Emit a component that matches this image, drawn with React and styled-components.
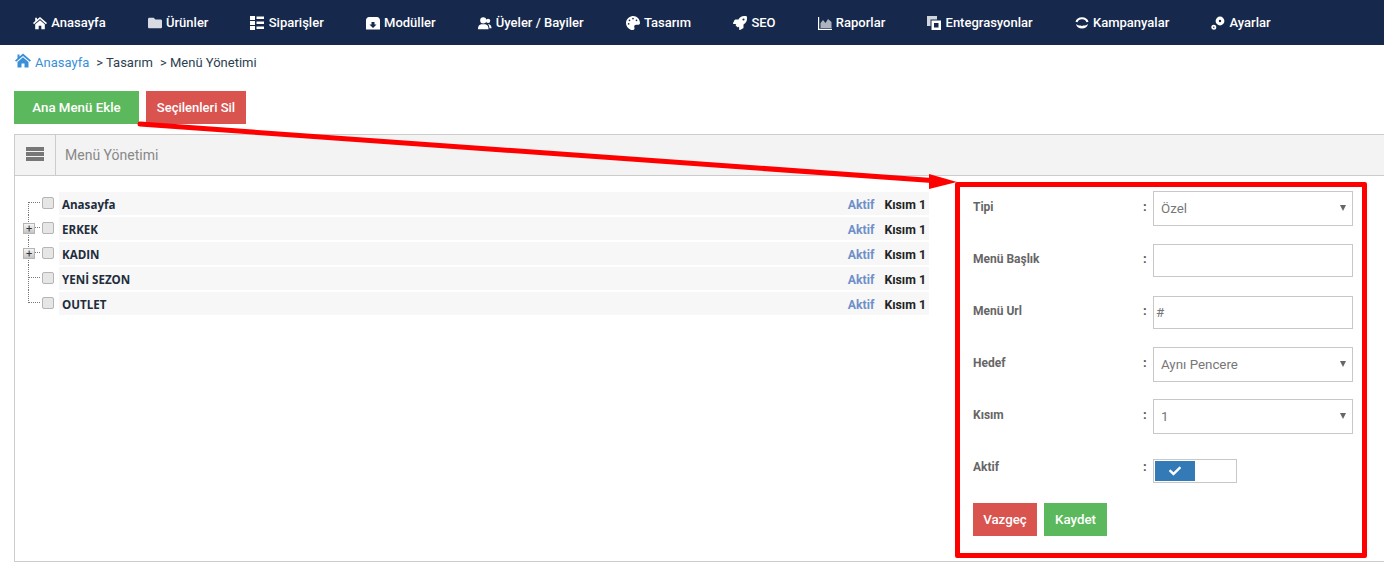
import React from 'react';
import styled, { createGlobalStyle } from 'styled-components';
import { FaFolder, FaPalette, FaRocket, FaCheck } from 'react-icons/fa';

const GlobalStyle = createGlobalStyle`
  html, body {
    margin: 0;
    padding: 0;
    background: #fff;
    font-family: Roboto, "Liberation Sans", sans-serif;
    overflow: hidden;
  }
`;

const Page = styled.div`
  position: relative;
  width: 1384px;
  height: 564px;
  overflow: hidden;
`;

const TopNav = styled.nav`
  height: 45px;
  background: #16284c;
  display: flex;
  align-items: center;
  padding-left: 12px;
`;

const NavItem = styled.a`
  display: flex;
  align-items: center;
  gap: 4.300px;
  padding: 0 21px;
  color: #fff;
  font-size: 13px;
  font-weight: 500;
  white-space: nowrap;

  svg {
    width: 14px;
    height: 14px;
    flex: none;
  }
`;

const Breadcrumb = styled.div`
  display: flex;
  align-items: center;
  height: 34px;
  padding-left: 15px;
  font-size: 13px;
  color: #2c3e50;
`;

const CrumbLink = styled.a`
  display: flex;
  align-items: center;
  gap: 4px;
  color: #3a8fd8;

  svg {
    width: 16px;
    height: 15px;
    margin-top: -3px;
  }
`;

const CrumbPart = styled.span`
  margin-left: 7px;
`;

const Actions = styled.div`
  display: flex;
  gap: 7px;
  padding: 12px 0 10px 14px;
`;

const Button = styled.button`
  height: 33px;
  width: ${(p) => p.$width}px;
  padding: 0;
  border: none;
  background: ${(p) => (p.$tone === 'red' ? '#d9534f' : '#5cb85c')};
  color: #fff;
  font-family: Roboto, "Liberation Sans", sans-serif;
  font-size: ${(p) => p.$size || 13.3}px;
  font-weight: 500;
`;

const Panel = styled.section`
  margin-left: 14px;
  height: 428px;
  border: 1px solid #ccc;
  border-right: none;
  box-sizing: border-box;
`;

const PanelHeader = styled.header`
  height: 40px;
  display: flex;
  align-items: center;
  background: #f3f3f3;
  border-bottom: 1px solid #ccc;
`;

const HeaderIcon = styled.div`
  width: 40px;
  height: 100%;
  display: flex;
  align-items: center;
  justify-content: center;
  border-right: 1px solid #ccc;
  color: #777;

  svg {
    width: 18px;
    height: 14px;
    margin-top: -2px;
  }
`;

const HeaderTitle = styled.div`
  padding-left: 9px;
  font-size: 14px;
  color: #888;
`;

const PanelBody = styled.div`
  display: flex;
  align-items: flex-start;
`;

const Tree = styled.ul`
  list-style: none;
  margin: 16px 0 0;
  padding: 0;
  width: 914px;
  flex: none;
  display: flex;
  flex-direction: column;
  gap: 2px;
`;

const TreeRow = styled.li`
  position: relative;
  display: flex;
  align-items: center;
  height: 23px;
  padding-left: 27px;
`;

const Connector = styled.span`
  position: absolute;
  left: 13px;
  top: ${(p) => (p.$first ? '10px' : '-2px')};
  bottom: ${(p) => (p.$last ? '12px' : '0')};
  border-left: 1px dotted #777;
  width: 11px;

  &::after {
    content: '';
    position: absolute;
    left: 0;
    right: 0;
    top: ${(p) => (p.$first ? '0' : '12px')};
    border-top: 1px dotted #777;
  }
`;

const Expander = styled.span`
  position: absolute;
  left: 8px;
  top: 6px;
  width: 10px;
  height: 9px;
  border: 1px solid #b5b5b5;
  background: linear-gradient(#f6f6f6, #c4c4c4);
  color: #333;
  font-size: 11px;
  line-height: 9px;
  text-align: center;
`;

const TreeCheck = styled.span`
  width: 10px;
  height: 10px;
  margin-bottom: 2px;
  border: 1px solid #b5b5b5;
  border-radius: 2px;
  background: #e6e6e6;
  flex: none;
`;

const RowBody = styled.div`
  flex: 1;
  height: 23px;
  margin-left: 5px;
  padding: 2px 3px 0;
  box-sizing: border-box;
  display: flex;
  align-items: center;
  background: #f7f7f7;
  font-size: 12px;
  font-weight: 700;
`;

const RowName = styled.span`
  flex: 1;
  margin-top: -1px;
  font-family: "Open Sans", "Noto Sans", sans-serif;
  font-size: 11.600px;
  color: #222c3c;
`;

const RowStatus = styled.span`
  color: #6f8fc9;
  font-size: 12.300px;
  margin-right: 10px;
`;

const RowPart = styled.span`
  color: #222;
  font-size: 12.300px;
`;

const FormBox = styled.form`
  width: 412px;
  height: 376px;
  margin-top: 6px;
  margin-left: 26px;
  box-sizing: border-box;
  border: 5px solid #f00;
  border-radius: 2px;
  padding: 4px 9px 0 13px;
  background: #fff;
`;

const FormRow = styled.div`
  display: grid;
  grid-template-columns: 170px 10px 200px;
  height: 52px;
`;

const FieldLabel = styled.label`
  padding-top: 9px;
  font-size: 12px;
  font-weight: 700;
  color: #666;
`;

const Colon = styled.span`
  padding-top: 8px;
  font-size: 13px;
  font-weight: 700;
  color: #555;
`;

const Field = styled.div`
  position: relative;
  width: 200px;
  height: ${(p) => (p.$select ? 35 : 33)}px;
  margin-top: ${(p) => (p.$select ? 0 : 1)}px;
  box-sizing: border-box;
  border: 1px solid #c8c8c8;
  padding: 0 7px 0 ${(p) => (p.$flush ? 2 : 7)}px;
  display: flex;
  align-items: center;
  font-size: 13.330px;
  color: #777;

  ${(p) =>
    p.$select &&
    `&::after {
      content: '';
      position: absolute;
      right: 6px;
      top: 13px;
      border-left: 3px solid transparent;
      border-right: 3px solid transparent;
      border-top: 6px solid #666;
    }`}
`;

const Toggle = styled.div`
  width: 84px;
  height: 24px;
  margin-top: 8px;
  box-sizing: border-box;
  border: 1px solid #c8c8c8;
  padding: 1px;
`;

const ToggleKnob = styled.div`
  width: 40px;
  height: 20px;
  background: #337ab7;
  color: #fff;
  display: flex;
  align-items: center;
  justify-content: center;

  svg {
    width: 12px;
    height: 12px;
  }
`;

const FormActions = styled.div`
  display: flex;
  gap: 7px;
`;

const Annotation = styled.svg`
  position: absolute;
  left: 0;
  top: 0;
  pointer-events: none;
`;

const HomeIcon = () => (
  <svg viewBox="0 0 16 14" fill="currentColor">
    <path d="M8 0l8 7-1.2 1.3L8 2.4 1.2 8.3 0 7l2.5-2.2V1h2v2z" />
    <path d="M8 3.8l5.5 4.7V14h-4v-4h-3v4h-4V8.500z" />
  </svg>
);

const ListIcon = () => (
  <svg viewBox="0 0 14 14" fill="currentColor">
    <path d="M0 0h5v4H0zM0 5h5v4H0zM0 10h5v4H0z" />
    <path d="M6.500 .5H14V3H6.500zM6.500 5.500H14V8H6.500zM6.500 10.500H14V13H6.500z" />
  </svg>
);

const BoxDownIcon = () => (
  <svg viewBox="0 0 14 14" fill="currentColor">
    <path fillRule="evenodd" d="M3 1h8c1.500 0 3 1.500 3 3v9.500H0V4c0-1.500 1.500-3 3-3zM5.500 6v2.500H3.500L7 12l3.500-3.500h-2V6z" />
  </svg>
);

const UsersIcon = () => (
  <svg viewBox="0 0 16 14" fill="currentColor">
    <circle cx="6" cy="4" r="3.500" />
    <path d="M0 14c0-4 2-5 3.500-5.500h5C10 9 12 10 12 14z" />
    <circle cx="11.500" cy="4.500" r="2.500" />
    <path d="M11.500 8c2.500.5 4 2 4 5H13c0-2-.5-3.500-1.500-5z" />
  </svg>
);

const ChartIcon = () => (
  <svg viewBox="0 0 14 14" fill="currentColor">
    <path d="M0 1h1.200v11.800H14V14H0z" />
    <path d="M2.500 12V7L5 4l2.500 3L10 3l3.500 3v6z" opacity="0.65" />
  </svg>
);

const CloneIcon = () => (
  <svg viewBox="0 0 14 14" fill="currentColor">
    <path d="M0 0h10v3.500H3.500V10H0z" opacity="0.8" />
    <path fillRule="evenodd" d="M4.500 4.500H14V14H4.500zM7 7v4.500h4.500V7z" />
  </svg>
);

const CampaignIcon = () => (
  <svg viewBox="0 0 14 14" fill="currentColor">
    <path d="M1.500 6C3 1 11 1 12.500 6" fill="none" stroke="currentColor" strokeWidth="2.200" />
    <path d="M1 8c2 2 4 1 6 2 2-1 4 0 6-2-1 6-11 6-12 0z" />
  </svg>
);

const GearsIcon = () => (
  <svg viewBox="0 0 14 14" fill="none" stroke="currentColor">
    <circle cx="9" cy="5" r="2.800" strokeWidth="3.200" />
    <circle cx="2.800" cy="11.300" r="1.600" strokeWidth="1.800" />
  </svg>
);

const BarsIcon = () => (
  <svg viewBox="0 0 18 14" fill="currentColor">
    <path d="M0 0h18v4H0zM0 5h18v4H0zM0 10h18v4H0z" />
  </svg>
);

const navItems = [
  { label: 'Anasayfa', icon: <HomeIcon /> },
  { label: 'Ürünler', icon: <FaFolder color="#d8dce2" /> },
  { label: 'Siparişler', icon: <ListIcon /> },
  { label: 'Modüller', icon: <BoxDownIcon /> },
  { label: 'Üyeler / Bayiler', icon: <UsersIcon /> },
  { label: 'Tasarım', icon: <FaPalette /> },
  { label: 'SEO', icon: <FaRocket /> },
  { label: 'Raporlar', icon: <ChartIcon /> },
  { label: 'Entegrasyonlar', icon: <CloneIcon /> },
  { label: 'Kampanyalar', icon: <CampaignIcon /> },
  { label: 'Ayarlar', icon: <GearsIcon /> },
];

const menuRows = [
  { name: 'Anasayfa' },
  { name: 'ERKEK', expandable: true },
  { name: 'KADIN', expandable: true },
  { name: 'YENİ SEZON' },
  { name: 'OUTLET' },
];

const App = () => {
  return (
    <Page>
      <GlobalStyle />
      <TopNav>
        {navItems.map((item) => (
          <NavItem key={item.label}>
            {item.icon}
            {item.label}
          </NavItem>
        ))}
      </TopNav>
      <Breadcrumb>
        <CrumbLink>
          <HomeIcon />
          Anasayfa
        </CrumbLink>
        <CrumbPart>&gt; Tasarım</CrumbPart>
        <CrumbPart>&gt; Menü Yönetimi</CrumbPart>
      </Breadcrumb>
      <Actions>
        <Button $width={125} $tone="green">Ana Menü Ekle</Button>
        <Button $width={100} $tone="red" $size={13}>Seçilenleri Sil</Button>
      </Actions>
      <Panel>
        <PanelHeader>
          <HeaderIcon>
            <BarsIcon />
          </HeaderIcon>
          <HeaderTitle>Menü Yönetimi</HeaderTitle>
        </PanelHeader>
        <PanelBody>
          <Tree>
            {menuRows.map((row, i) => (
              <TreeRow key={row.name}>
                <Connector $first={i === 0} $last={i === menuRows.length - 1} />
                {row.expandable && <Expander>+</Expander>}
                <TreeCheck />
                <RowBody>
                  <RowName>{row.name}</RowName>
                  <RowStatus>Aktif</RowStatus>
                  <RowPart>Kısım 1</RowPart>
                </RowBody>
              </TreeRow>
            ))}
          </Tree>
          <FormBox>
            <FormRow>
              <FieldLabel>Tipi</FieldLabel>
              <Colon>:</Colon>
              <Field $select>Özel</Field>
            </FormRow>
            <FormRow>
              <FieldLabel>Menü Başlık</FieldLabel>
              <Colon>:</Colon>
              <Field />
            </FormRow>
            <FormRow>
              <FieldLabel>Menü Url</FieldLabel>
              <Colon>:</Colon>
              <Field $flush>#</Field>
            </FormRow>
            <FormRow>
              <FieldLabel>Hedef</FieldLabel>
              <Colon>:</Colon>
              <Field $select>Aynı Pencere</Field>
            </FormRow>
            <FormRow>
              <FieldLabel>Kısım</FieldLabel>
              <Colon>:</Colon>
              <Field $select>1</Field>
            </FormRow>
            <FormRow>
              <FieldLabel>Aktif</FieldLabel>
              <Colon>:</Colon>
              <Toggle>
                <ToggleKnob>
                  <FaCheck />
                </ToggleKnob>
              </Toggle>
            </FormRow>
            <FormActions>
              <Button $width={64} $tone="red">Vazgeç</Button>
              <Button $width={63} $tone="green">Kaydet</Button>
            </FormActions>
          </FormBox>
        </PanelBody>
      </Panel>
      <Annotation width="1384" height="564">
        <line x1="140" y1="124" x2="932" y2="180.500" stroke="#f00" strokeWidth="5" strokeLinecap="round" />
        <polygon points="929,174 957,182 929,189" fill="#f00" />
      </Annotation>
    </Page>
  );
};

export default App;
